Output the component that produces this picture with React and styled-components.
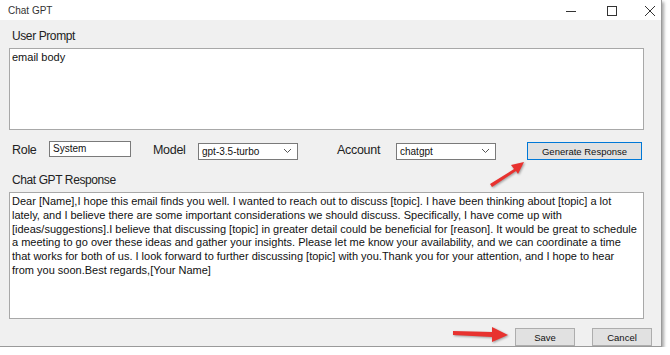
import styled, { createGlobalStyle } from 'styled-components';

const GlobalStyle = createGlobalStyle`
  html, body {
    margin: 0;
    padding: 0;
    background: #ffffff;
  }
  body {
    font-family: "Liberation Sans", Arial, sans-serif;
  }
`;

const responseLines = [
  'Dear [Name],I hope this email finds you well. I wanted to reach out to discuss [topic]. I have been thinking about [topic] a lot',
  'lately, and I believe there are some important considerations we should discuss. Specifically, I have come up with',
  '[ideas/suggestions].I believe that discussing [topic] in greater detail could be beneficial for [reason]. It would be great to schedule',
  'a meeting to go over these ideas and gather your insights. Please let me know your availability, and we can coordinate a time',
  'that works for both of us. I look forward to further discussing [topic] with you.Thank you for your attention, and I hope to hear',
  'from you soon.Best regards,[Your Name]',
];

function Arrow({ x, y, w, h, d }) {
  return (
    <ArrowSvg style={{ left: x, top: y }} width={w} height={h} viewBox={`0 0 ${w} ${h}`}>
      <path d={d} fill="#e8322f" />
    </ArrowSvg>
  );
}

export default function App() {
  return (
    <>
      <GlobalStyle />
      <Window>
        <TitleBar>
          <Title>Chat GPT</Title>
          <Controls>
            <svg width="12" height="12" viewBox="0 0 12 12">
              <path d="M1 6.5h10" stroke="#333" strokeWidth="1" />
            </svg>
            <svg width="12" height="12" viewBox="0 0 12 12">
              <rect x="1.5" y="1.5" width="9" height="9" fill="none" stroke="#333" strokeWidth="1" />
            </svg>
            <svg width="12" height="12" viewBox="0 0 12 12">
              <path d="M1 1l10 10M11 1L1 11" stroke="#333" strokeWidth="1" />
            </svg>
          </Controls>
        </TitleBar>
        <Body>
          <Label $top={8}>User Prompt</Label>
          <TextArea $height={82}>email body</TextArea>
          <OptionsRow>
            <RowLabel $width={37}>Role</RowLabel>
            <TextInput>System</TextInput>
            <RowLabel $width={45} $gap={22}>Model</RowLabel>
            <Select>
              <span>gpt-3.5-turbo</span>
              <Chevron />
            </Select>
            <RowLabel $width={59} $gap={39}>Account</RowLabel>
            <Select>
              <span>chatgpt</span>
              <Chevron />
            </Select>
            <Button $width={115} $primary $gap={31}>Generate Response</Button>
          </OptionsRow>
          <Label $top={12}>Chat GPT Response</Label>
          <TextArea $height={127}>
            {responseLines.map((line, i) => (
              <Line key={i}>{line}</Line>
            ))}
          </TextArea>
          <Footer>
            <Button $width={60}>Save</Button>
            <Button $width={60} $gap={17}>Cancel</Button>
          </Footer>
        </Body>
        <Arrow x={488} y={160} w={42} h={28} d="M2 24 L26 9 L23 5 L36 2 L30 14 L28 11 L4 27 Z" />
        <Arrow x={452} y={325} w={58} h={18} d="M1 6 L40 7 L40 2 L56 10 L40 17 L40 12 L1 10 Z" />
      </Window>
    </>
  );
}

function Chevron() {
  return (
    <svg width="9" height="6" viewBox="0 0 9 6">
      <path d="M1 1l3.5 3.5L8 1" fill="none" stroke="#555" strokeWidth="1" />
    </svg>
  );
}

const Window = styled.div`
  position: relative;
  width: 661px;
  height: 346px;
  background: #f0f0f0;
  border-right: 1px solid #9a9a9a;
  border-bottom: 1px solid #9a9a9a;
  box-shadow: 2px 2px 3px rgba(0, 0, 0, 0.35);
  display: flex;
  flex-direction: column;
`;

const TitleBar = styled.div`
  height: 21px;
  background: #ffffff;
  display: flex;
  align-items: center;
  justify-content: space-between;
  padding: 0 0 0 8px;
`;

const Title = styled.div`
  font-size: 10px;
  color: #333;
`;

const Controls = styled.div`
  display: flex;
  align-items: center;
  gap: 26px;
  padding-right: 5px;
  margin-top: 1px;

  svg:first-child {
    margin-right: 3px;
  }
`;

const Body = styled.div`
  flex: 1;
  padding: 0 17px 0 9px;
  display: flex;
  flex-direction: column;
`;

const Label = styled.div`
  margin-top: ${(p) => p.$top}px;
  margin-left: 3px;
  height: 16px;
  line-height: 16px;
  font-size: 12px;
  letter-spacing: -0.4px;
  color: #222;
  margin-bottom: 4px;
`;

const TextArea = styled.div`
  height: ${(p) => p.$height}px;
  box-sizing: border-box;
  background: #ffffff;
  border: 1px solid #a8a8a8;
  padding: 2px 2px;
  font-size: 11px;
  line-height: 13.8px;
  color: #111;
  overflow: hidden;
`;

const Line = styled.div`
  white-space: nowrap;
`;

const OptionsRow = styled.div`
  display: flex;
  align-items: center;
  height: 20px;
  margin-top: 10px;
  padding-left: 3px;
`;

const RowLabel = styled.div`
  width: ${(p) => p.$width}px;
  margin-left: ${(p) => p.$gap || 0}px;
  font-size: 12.5px;
  letter-spacing: -0.3px;
  color: #222;
`;

const TextInput = styled.div`
  width: 82px;
  height: 16px;
  box-sizing: border-box;
  background: #fff;
  border: 1px solid #7a7a7a;
  font-size: 10px;
  line-height: 14px;
  padding-left: 3px;
  color: #111;
  margin-top: -2px;
`;

const Select = styled.div`
  width: 100px;
  height: 17px;
  box-sizing: border-box;
  background: #fff;
  border: 1px solid #7a7a7a;
  display: flex;
  align-items: center;
  justify-content: space-between;
  padding: 0 5px 0 3px;
  font-size: 10px;
  color: #111;
  margin-top: 2px;
`;

const Button = styled.div`
  width: ${(p) => p.$width}px;
  height: 18px;
  box-sizing: border-box;
  margin-left: ${(p) => p.$gap || 0}px;
  margin-top: 2px;
  background: #e1e1e1;
  border: 1px solid ${(p) => (p.$primary ? '#0078d7' : '#adadad')};
  font-size: 9.5px;
  color: #111;
  display: flex;
  align-items: center;
  justify-content: center;
`;

const Footer = styled.div`
  display: flex;
  justify-content: flex-end;
  margin-top: 7px;
  margin-right: -8px;
`;

const ArrowSvg = styled.svg`
  position: absolute;
  filter: drop-shadow(1px 1px 1px rgba(0, 0, 0, 0.35));
`;
